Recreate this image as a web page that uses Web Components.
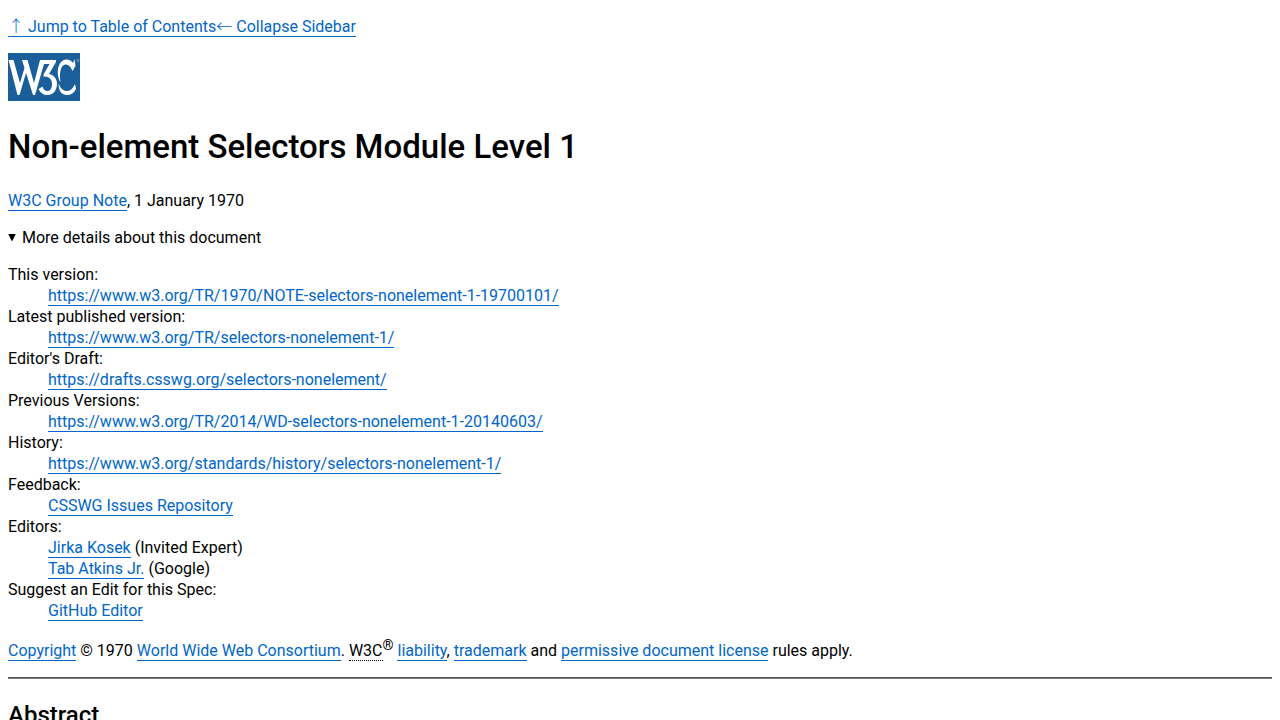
<!DOCTYPE html>
<html lang="en">
<head>
<meta charset="utf-8">
<title>Non-element Selectors Module Level 1</title>
<style>
body { margin: 0 8px; font: 16px/21px Roboto, "Liberation Sans", sans-serif; color: #000; background: #fff; }
</style>
</head>
<body>
<spec-nav></spec-nav>
<spec-header>
  <span slot="title">Non-element Selectors Module Level 1</span>
  <span slot="date">1 January 1970</span>
  <spec-details slot="details">
    <spec-entry label="This version:"><spec-link>https://www.w3.org/TR/1970/NOTE-selectors-nonelement-1-19700101/</spec-link></spec-entry>
    <spec-entry label="Latest published version:"><spec-link>https://www.w3.org/TR/selectors-nonelement-1/</spec-link></spec-entry>
    <spec-entry label="Editor's Draft:"><spec-link>https://drafts.csswg.org/selectors-nonelement/</spec-link></spec-entry>
    <spec-entry label="Previous Versions:"><spec-link>https://www.w3.org/TR/2014/WD-selectors-nonelement-1-20140603/</spec-link></spec-entry>
    <spec-entry label="History:"><spec-link>https://www.w3.org/standards/history/selectors-nonelement-1/</spec-link></spec-entry>
    <spec-entry label="Feedback:"><spec-link>CSSWG Issues Repository</spec-link></spec-entry>
    <spec-entry label="Editors:">
      <div><spec-link>Jirka Kosek</spec-link> (Invited Expert)</div>
      <div><spec-link>Tab Atkins Jr.</spec-link> (Google)</div>
    </spec-entry>
    <spec-entry label="Suggest an Edit for this Spec:"><spec-link>GitHub Editor</spec-link></spec-entry>
  </spec-details>
</spec-header>
<spec-copyright></spec-copyright>
<spec-section>Abstract</spec-section>
<script>
const define = (name, html, setup) => customElements.define(name, class extends HTMLElement {
  constructor() {
    super();
    const template = document.createElement('template');
    template.innerHTML = html;
    this.attachShadow({ mode: 'open' }).append(template.content.cloneNode(true));
    if (setup) setup(this);
  }
});

define('spec-link', `<style>
:host { display: inline; }
a { color: #0066cc; text-decoration: none; border-bottom: 1px solid #0066cc; }
a:hover { background: #f2f7fc; }
</style><a href="#"><slot></slot></a>`);

define('spec-nav', `
<style>
:host { display: block; margin: 16px 0; }
.arrow { font-family: "Noto Sans CJK JP", sans-serif; font-weight: 300; line-height: 1px; }
</style>
<nav><spec-link><span class="arrow">↑</span> Jump to Table of Contents</spec-link><spec-link><span class="arrow">←</span> Collapse Sidebar</spec-link></nav>`);

define('w3c-logo', `
<style>:host { display: block; } a, svg { display: block; width: 72px; height: 48px; }</style>
<a href="#" aria-label="W3C"><svg viewBox="0 0 72 48" role="img" aria-label="W3C">
<path fill="#1a5e9a" d="M0 0h72v48H0z"/>
<path fill="#fff" d="M0.500 7H5.500L12 30l4.500-15L14 7h5.500L26 30 32 7h16v2l-7 12c5 1 8 5 8 9.500 0 7-4 11.500-9.500 11.500-4 0-7-2-9-6l4-2.500c1 3 2.500 4.500 5 4.500 3 0 4.500-3 4.500-7 0-5-3-7.500-8.500-7.500v-2L41.500 11H36L27 42h-2l-7-22-6.500 22h-2z"/>
<path fill="#fff" d="M66.500 6l1 7-3 5c-2-4.500-4-6.500-6.500-6.500-5 0-7 7-5.500 18-5.500-10-2-23 6-23 3 0 5 1.500 6.500 3.500zM50.500 30c2 6 5 8 8.500 8 4 0 6-3 8-7l1 5c-2 4-5 6-9 6-5.500 0-8.500-4-8.500-12z"/>
<circle cx="70" cy="7.500" r="1.200" fill="none" stroke="#8db4d3" stroke-width=".6"/>
</svg></a>`);

define('spec-header', `
<style>
:host { display: block; }
h1 { font-size: 33px; line-height: 41px; font-weight: 500; margin: 25px 0 23px; }
p { margin: 0 0 16px; }
</style>
<header><w3c-logo></w3c-logo>
<h1><slot name="title"></slot></h1>
<p><spec-link>W3C Group Note</spec-link>, <slot name="date"></slot></p>
<slot name="details"></slot></header>`);

define('spec-details', `
<style>
:host { display: block; }
summary { display: flex; align-items: center; gap: 6px; cursor: default; }
summary::before { content: ""; width: 8px; height: 8px; background: #000; clip-path: polygon(0 0, 100% 0, 50% 100%); }
.list { margin: 16px 0; }
</style>
<details open><summary>More details about this document</summary><div class="list"><slot></slot></div></details>`);

define('spec-entry', `
<style>
:host { display: block; }
dl { margin: 0; }
dd { margin: 0 0 0 40px; }
</style>
<dl><dt></dt><dd><slot></slot></dd></dl>`, el => {
  el.shadowRoot.querySelector('dt').textContent = el.getAttribute('label');
});

define('spec-copyright', `
<style>
:host { display: block; }
p { margin: 16px 0; }
sup { font-size: 14px; line-height: 16px; }
abbr { text-decoration: none; border-bottom: 1px dotted #000; }
hr { height: 0; margin: 0; border: 0; border-top: 1px solid #555; border-bottom: 1px solid #777; }
</style>
<p><spec-link>Copyright</spec-link> © 1970 <spec-link>World Wide Web Consortium</spec-link>. <abbr title="World Wide Web Consortium">W3C</abbr><sup>®</sup> <spec-link>liability</spec-link>, <spec-link>trademark</spec-link> and <spec-link>permissive document license</spec-link> rules apply.</p>
<hr>`);

define('spec-section', `
<style>
:host { display: block; }
h2 { font-size: 24px; line-height: 30px; font-weight: 500; margin: 21px 0; }
</style>
<h2><slot></slot></h2>`);
</script>
</body>
</html>
